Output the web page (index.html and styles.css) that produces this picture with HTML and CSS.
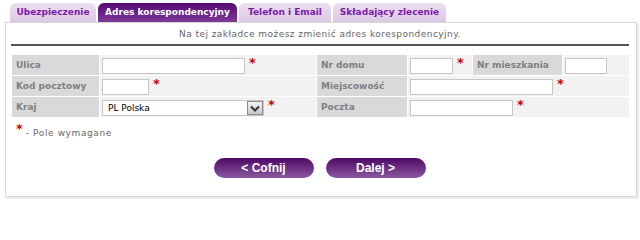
FILE: index.html
```html
<!DOCTYPE html>
<html lang="pl">
<head>
<meta charset="utf-8">
<title>Adres korespondencyjny</title>
<link rel="stylesheet" href="styles.css">
</head>
<body>
<div class="tabs">
  <div class="tab t1">Ubezpieczenie</div>
  <div class="tab t2 active">Adres korespondencyjny</div>
  <div class="tab t3">Telefon i Email</div>
  <div class="tab t4">Składający zlecenie</div>
</div>
<div class="panel">
  <div class="intro">Na tej zakładce możesz zmienić adres korespondencyjny.</div>
  <table class="form">
    <colgroup>
      <col class="c1"><col class="c2"><col class="c3"><col class="c4"><col class="c5"><col class="c6">
    </colgroup>
    <tr>
      <td class="lbl">Ulica</td>
      <td class="fld"><input class="inp w-ulica" type="text"><span class="req">*</span></td>
      <td class="lbl">Nr domu</td>
      <td class="fld"><input class="inp w-dom" type="text"><span class="req">*</span></td>
      <td class="lbl">Nr mieszkania</td>
      <td class="fld"><input class="inp w-msz" type="text"></td>
    </tr>
    <tr>
      <td class="lbl">Kod pocztowy</td>
      <td class="fld"><input class="inp w-kod" type="text"><span class="req">*</span></td>
      <td class="lbl">Miejscowość</td>
      <td class="fld" colspan="3"><input class="inp w-miej" type="text"><span class="req">*</span></td>
    </tr>
    <tr>
      <td class="lbl">Kraj</td>
      <td class="fld"><div class="select"><span class="sel-text">PL Polska</span><span class="sel-btn"><svg width="10" height="7" viewBox="0 0 10 7"><path d="M1 1.5 L5 5.5 L9 1.5" fill="none" stroke="#333" stroke-width="2"/></svg></span></div><span class="req">*</span></td>
      <td class="lbl">Poczta</td>
      <td class="fld" colspan="3"><input class="inp w-poczta" type="text"><span class="req">*</span></td>
    </tr>
  </table>
  <div class="legend"><span class="req">*</span><span class="legend-text">- Pole wymagane</span></div>
  <div class="buttons">
    <button class="btn" type="button">&lt; Cofnij</button>
    <button class="btn" type="button">Dalej &gt;</button>
  </div>
</div>
</body>
</html>
```
FILE: styles.css
```css
html, body {
  margin: 0;
  padding: 0;
  background: #ffffff;
}
body {
  font-family: "DejaVu Sans", Verdana, sans-serif;
  width: 640px;
  height: 203px;
  overflow: hidden;
}
.tabs {
  display: flex;
  gap: 2px;
  padding: 3px 0 0 10px;
  height: 19px;
}
.tab {
  height: 19px;
  line-height: 19px;
  border-radius: 6px 6px 0 0;
  background: linear-gradient(#ecdff0, #dcc8e4);
  color: #7a1aa8;
  font-size: 9px;
  font-weight: bold;
  text-align: center;
}
.t1 { width: 86px; }
.t2 { width: 139px; }
.t3 { width: 92px; }
.t4 { width: 113px; }
.tab.active {
  background: linear-gradient(#560874, #7c3a98);
  color: #ffffff;
}
.panel {
  margin-left: 5px;
  width: 632px;
  height: 175px;
  border: 1px solid #d6d6d6;
  box-shadow: 2px 2px 0 #ebebeb;
  padding: 0 6px 0 5px;
  box-sizing: border-box;
  background: #fff;
}
.intro {
  height: 21px;
  line-height: 22px;
  text-align: center;
  font-size: 9px;
  color: #666;
  letter-spacing: 0.45px;
  border-bottom: 2px solid #555;
  margin-right: 1px;
}
.form {
  margin-top: 8px;
  border-spacing: 1px;
  border-collapse: separate;
  table-layout: fixed;
  width: 619px;
}
.c1 { width: 87px; }
.c2 { width: 216px; }
.c3 { width: 90px; }
.c4 { width: 64px; }
.c5 { width: 89px; }
.c6 { width: 66px; }
.form td {
  height: 20px;
  padding: 0;
}
.lbl {
  background: #d9d9d9;
  color: #808080;
  font-size: 9px;
  font-weight: bold;
  padding-left: 4px !important;
}
.fld {
  background: #f2f2f2;
  padding-left: 2px !important;
  white-space: nowrap;
}
.inp {
  box-sizing: border-box;
  height: 16px;
  border: 1px solid #c6c6c6;
  background: #fff;
  margin: 0;
  padding: 0 4px;
  vertical-align: middle;
  font-size: 9px;
}
.w-ulica { width: 143px; }
.w-kod { width: 47px; }
.w-dom { width: 43px; }
.w-msz { width: 42px; }
.w-miej { width: 143px; }
.w-poczta { width: 103px; }
.req {
  color: #cc0000;
  font-size: 13px;
  font-weight: bold;
  vertical-align: top;
  margin-left: 4px;
  line-height: 14px;
}
.select {
  display: inline-flex;
  align-items: center;
  box-sizing: border-box;
  width: 162px;
  height: 16px;
  border: 1px solid #c6c6c6;
  background: #fff;
  vertical-align: middle;
}
.sel-text {
  flex: 1;
  font-size: 9px;
  color: #000;
  padding-left: 5px;
}
.sel-btn {
  width: 16px;
  height: 14px;
  box-sizing: border-box;
  border: 1px solid #8c8c8c;
  background: linear-gradient(#f2f2f2, #c8c8cc);
  display: flex;
  align-items: center;
  justify-content: center;
}
.legend {
  display: flex;
  align-items: flex-start;
  margin-top: 4px;
  padding-left: 5px;
  height: 20px;
}
.legend .req {
  margin-left: 0;
}
.legend-text {
  font-size: 9px;
  color: #666;
  letter-spacing: 0.6px;
  margin-top: 6px;
  margin-left: 3px;
}
.buttons {
  display: flex;
  justify-content: center;
  gap: 12px;
  margin-top: 16px;
  padding-right: 2px;
}
.btn {
  width: 100px;
  height: 20px;
  border: 0;
  border-radius: 10px;
  background: linear-gradient(#4c0764, #8c5aa2);
  color: #fff;
  font-family: "Liberation Sans", Arial, sans-serif;
  font-weight: bold;
  font-size: 12px;
  padding: 0;
}
```
